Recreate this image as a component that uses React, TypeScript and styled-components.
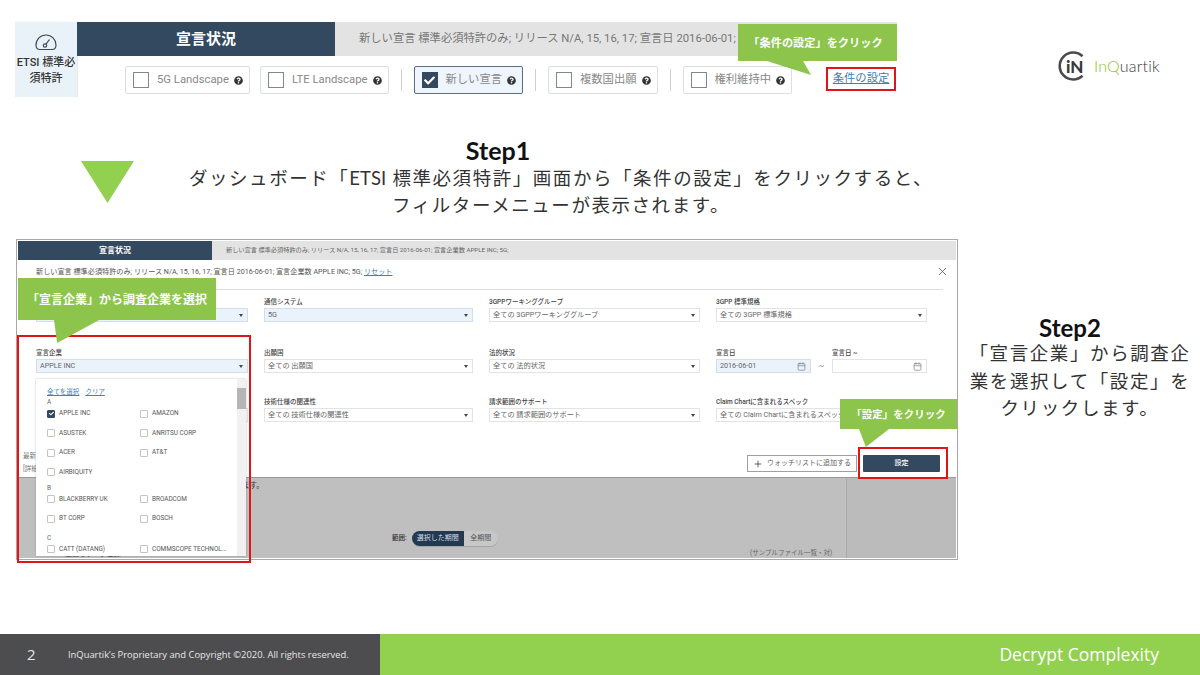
import * as React from "react"
import styled, { createGlobalStyle } from "styled-components"
import { FaQuestionCircle, FaCheck } from "react-icons/fa"
import { Calendar, Plus, X } from "lucide-react"

const UI_FONT = `Roboto, "Noto Sans CJK JP", sans-serif`
const SLIDE_FONT = `Lato, "Noto Sans CJK JP", sans-serif`
const NAVY = "#33495f"
const LIME = "#92d050"
const CALLOUT = "#8cc44c"
const RED = "#e01515"

const fields = [
  { label: "", value: "", filled: true },
  { label: "通信システム", value: "5G", filled: true },
  { label: "3GPPワーキンググループ", value: "全ての 3GPPワーキンググループ" },
  { label: "3GPP 標準規格", value: "全ての 3GPP 標準規格" },
  { label: "宣言企業", value: "APPLE INC", filled: true },
  { label: "出願国", value: "全ての 出願国" },
  { label: "法的状況", value: "全ての 法的状況" },
  null,
  { label: "", value: "" },
  { label: "技術仕様の関連性", value: "全ての 技術仕様の関連性" },
  { label: "請求範囲のサポート", value: "全ての 請求範囲のサポート" },
  { label: "Claim Chartに含まれるスペック", value: "全ての Claim Chartに含まれるスペック" },
]

const companies = [
  { head: "A", pull: 0, rows: [["APPLE INC", "AMAZON"], ["ASUSTEK", "ANRITSU CORP"], ["ACER", "AT&T"], ["AIRBIQUITY"]] },
  { head: "B", pull: -4.5, rows: [["BLACKBERRY UK", "BROADCOM"], ["BT CORP", "BOSCH"]] },
  { head: "C", pull: -1, rows: [["CATT (DATANG)", "COMMSCOPE TECHNOL..."]] },
]

const App = () => {
  return (
    <Slide>
      <GlobalStyle />
      <TopRow>
        <DashShot>
          <Tile>
            <svg width="22" height="17" viewBox="0 0 22 17" fill="none" stroke="#3c4a57" strokeWidth="1.2">
              <path d="M5 15.5h12c2.5 0 4-1.8 4-4.5C21 5.5 16.5 1 11 1S1 5.5 1 11c0 2.7 1.5 4.5 4 4.5z" />
              <circle cx="10" cy="11.5" r="1.7" />
              <path d="M11 10.2l3.5-4.7" />
            </svg>
            <TileLabel>ETSI 標準必須特許</TileLabel>
          </Tile>
          <DashBody>
            <TabBar>
              <ActiveTab>宣言状況</ActiveTab>
              <TabSummary>新しい宣言 標準必須特許のみ; リリース N/A, 15, 16, 17; 宣言日 2016-06-01;</TabSummary>
            </TabBar>
            <ChipRow>
              <Chip><Box /><ChipText>5G Landscape</ChipText><FaQuestionCircle size={9} color="#333" /></Chip>
              <Chip><Box /><ChipText>LTE Landscape</ChipText><FaQuestionCircle size={9} color="#333" /></Chip>
              <Divider />
              <Chip $active>
                <Box $checked><FaCheck size={11} color="#fff" /></Box>
                <ChipText>新しい宣言</ChipText><FaQuestionCircle size={9} color="#333" />
              </Chip>
              <Divider />
              <Chip><Box /><ChipText>複数国出願</ChipText><FaQuestionCircle size={9} color="#333" /></Chip>
              <Divider />
              <Chip><Box /><ChipText>権利維持中</ChipText><FaQuestionCircle size={9} color="#333" /></Chip>
              <SettingsLink>条件の設定</SettingsLink>
            </ChipRow>
          </DashBody>
          <TopCallout>「条件の設定」をクリック</TopCallout>
        </DashShot>
        <Logo>
          <svg width="34" height="30" viewBox="0 0 34 30" fill="none">
            <path d="M24.5 5.2A13.5 13.5 0 1 0 24.5 24.8" stroke="#4a4a4c" strokeWidth="2.6" />
            <text x="8" y="21.5" fontFamily="Lato, sans-serif" fontWeight="900" fontSize="17" fill="#3a3a3c">iN</text>
          </svg>
          <LogoWord><LogoAccent>InQ</LogoAccent>uartik</LogoWord>
        </Logo>
      </TopRow>

      <StepOneRow>
        <Triangle />
        <StepOneText>
          <StepOneTitle>Step1</StepOneTitle>
          <StepCopy>ダッシュボード「<Latin>ETSI</Latin> 標準必須特許」画面から「条件の設定」をクリックすると、<br />フィルターメニューが表示されます。</StepCopy>
        </StepOneText>
      </StepOneRow>

      <MainRow>
        <FilterShot>
          <ShotTabs>
            <ShotActiveTab>宣言状況</ShotActiveTab>
            <ShotSummary>新しい宣言 標準必須特許のみ; リリース N/A, 15, 16, 17; 宣言日 2016-06-01; 宣言企業数 APPLE INC; 5G;</ShotSummary>
          </ShotTabs>
          <Modal>
            <ModalHeader>
              <ModalSummary>新しい宣言 標準必須特許のみ; リリース N/A, 15, 16, 17; 宣言日 2016-06-01; 宣言企業数 APPLE INC; 5G; <ResetLink>リセット</ResetLink></ModalSummary>
              <CloseIcon size={13} color="#555" strokeWidth={1.5} />
            </ModalHeader>
            <FieldGrid>
              {fields.map((f, i) => f ? (
                <Field key={i}>
                  <FieldLabel>{f.label}</FieldLabel>
                  <Select $filled={f.filled}><SelectValue>{f.value}</SelectValue><Caret /></Select>
                </Field>
              ) : (
                <DateGroup key={i}>
                  <Field>
                    <FieldLabel>宣言日</FieldLabel>
                    <Select $filled><SelectValue>2016-06-01</SelectValue><Calendar size={9} color="#888" /></Select>
                  </Field>
                  <Tilde>~</Tilde>
                  <Field>
                    <FieldLabel>宣言日 ~</FieldLabel>
                    <Select><SelectValue /><Calendar size={9} color="#888" /></Select>
                  </Field>
                </DateGroup>
              ))}
            </FieldGrid>
            <ModalFooter>
              <FooterStubs><span>最新</span><span>[詳細</span></FooterStubs>
              <WatchButton><Plus size={10} color="#444" strokeWidth={2} />ウォッチリストに追加する</WatchButton>
              <ApplyButton>設定</ApplyButton>
            </ModalFooter>
          </Modal>
          <Backdrop>
            <BackdropMain>
              <BackdropNote>ます。</BackdropNote>
              <RangeRow>
                <RangeLabel>範囲:</RangeLabel>
                <Toggle>
                  <ToggleOption $on>選択した期間</ToggleOption>
                  <ToggleOption>全期間</ToggleOption>
                </Toggle>
              </RangeRow>
              <ClippedNote>重要なデータ登録 <RedMark>▾</RedMark></ClippedNote>
            </BackdropMain>
            <BackdropSide>(サンプルファイル一覧・対)</BackdropSide>
          </Backdrop>

          <CompanyMenu>
            <MenuList>
              <MenuLinks><MenuLink>全てを選択</MenuLink><MenuLink>クリア</MenuLink></MenuLinks>
              {companies.map(group => (
                <React.Fragment key={group.head}>
                  <GroupHead $pull={group.pull}>{group.head}</GroupHead>
                  {group.rows.map(row => (
                    <CompanyRow key={row[0]}>
                      {row.map(name => (
                        <Company key={name}>
                          <MiniBox $checked={name === "APPLE INC"}>
                            {name === "APPLE INC" && <FaCheck size={5} color="#fff" />}
                          </MiniBox>
                          {name}
                        </Company>
                      ))}
                    </CompanyRow>
                  ))}
                </React.Fragment>
              ))}
            </MenuList>
            <Scrollbar><ScrollThumb /></Scrollbar>
          </CompanyMenu>

          <CompanyHighlight />
          <ApplyHighlight />
          <CompanyCallout>「宣言企業」から調査企業を選択</CompanyCallout>
          <ApplyCallout>「設定」をクリック</ApplyCallout>
        </FilterShot>
        <StepTwo>
          <StepTwoTitle>Step2</StepTwoTitle>
          <StepTwoCopy>「宣言企業」から調査企業を選択して「設定」をクリックします。</StepTwoCopy>
        </StepTwo>
      </MainRow>

      <Footer>
        <FooterDark>
          <PageNo>2</PageNo>
          <Copyright>InQuartik’s Proprietary and Copyright ©2020. All rights reserved.</Copyright>
        </FooterDark>
        <FooterGreen>Decrypt Complexity</FooterGreen>
      </Footer>
    </Slide>
  )
}

const GlobalStyle = createGlobalStyle`
  html, body {
    margin: 0;
    padding: 0;
    background: #fff;
  }
`
const Slide = styled.div`
  width: 1200px;
  height: 675px;
  overflow: hidden;
  display: flex;
  flex-direction: column;
  background: #fff;
  font-family: ${SLIDE_FONT};
`
const TopRow = styled.div`
  display: flex;
  padding: 22px 0 0 15px;
  height: 75px;
`
const DashShot = styled.div`
  position: relative;
  display: flex;
  flex-shrink: 0;
  width: 882px;
  height: 75px;
`
const Tile = styled.div`
  width: 62px;
  height: 75px;
  box-sizing: border-box;
  padding-top: 12px;
  background: #eaf2f9;
  display: flex;
  flex-direction: column;
  align-items: center;
  box-shadow: 1px 0 1px rgba(0, 0, 0, 0.08);
`
const TileLabel = styled.div`
  margin-top: 4px;
  font: 500 11px/16px ${UI_FONT};
  color: #333;
  text-align: center;
  width: 62px;
`
const DashBody = styled.div`
  flex: 1;
  min-width: 0;
  display: flex;
  flex-direction: column;
`
const TabBar = styled.div`
  display: flex;
  height: 34px;
  background: #e3e3e3;
`
const ActiveTab = styled.div`
  flex-shrink: 0;
  width: 258px;
  background: ${NAVY};
  color: #fff;
  font: 700 15px/34px ${UI_FONT};
  text-align: center;
`
const TabSummary = styled.div`
  padding-left: 24px;
  font: 400 11.3px/34px ${UI_FONT};
  color: #777;
  white-space: nowrap;
  overflow: hidden;
`
const ChipRow = styled.div`
  display: flex;
  align-items: center;
  height: 28px;
  margin-top: 10px;
  padding-left: 48px;
`
const Chip = styled.div<{ $active?: boolean }>`
  display: flex;
  align-items: center;
  flex-shrink: 0;
  height: 28px;
  box-sizing: border-box;
  padding: 0 6px 0 7px;
  margin-right: 10px;
  border: 1px solid ${p => p.$active ? "#5b6f84" : "#dedede"};
  border-radius: 2px;
  background: ${p => p.$active ? "#eef5fc" : "#fff"};
`
const Box = styled.span<{ $checked?: boolean }>`
  width: 16px;
  height: 16px;
  box-sizing: border-box;
  margin-right: 8px;
  display: flex;
  align-items: center;
  justify-content: center;
  border: 1px solid ${p => p.$checked ? NAVY : "#808890"};
  background: ${p => p.$checked ? NAVY : "#fff"};
`
const ChipText = styled.span`
  margin-right: 5px;
  font: 400 11.3px/1 ${UI_FONT};
  color: #888;
  white-space: nowrap;
`
const Divider = styled.span`
  flex-shrink: 0;
  width: 1px;
  height: 22px;
  margin: 0 12px 0 2px;
  background: #d0d0d0;
`
const SettingsLink = styled.a`
  flex-shrink: 0;
  margin: 0 0 2px 24px;
  width: 70px;
  height: 24px;
  box-sizing: border-box;
  border: 2px solid ${RED};
  font: 400 11.3px/20px ${UI_FONT};
  color: #3f7fb5;
  text-align: center;
  text-decoration: underline;
  white-space: nowrap;
`
const CalloutBase = styled.div`
  position: absolute;
  background: ${CALLOUT};
  color: #fff;
  font-family: ${SLIDE_FONT};
  font-weight: 700;
  text-align: center;
  white-space: nowrap;

  &::after {
    content: '';
    position: absolute;
    top: 100%;
    background: ${CALLOUT};
  }
`
const TopCallout = styled(CalloutBase)`
  left: 723px;
  top: 2px;
  width: 159px;
  height: 37px;
  box-sizing: border-box;
  padding-right: 4px;
  font-size: 11.2px;
  line-height: 38px;

  &::after {
    left: 29px;
    width: 44px;
    height: 14px;
    clip-path: polygon(0 0, 82% 0, 100% 100%);
  }
`
const CompanyCallout = styled(CalloutBase)`
  left: 1px;
  top: 38px;
  width: 198px;
  height: 42px;
  font-size: 12px;
  line-height: 44px;

  &::after {
    left: 36px;
    width: 45px;
    height: 23px;
    clip-path: polygon(0 0, 100% 0, 7% 100%);
  }
`
const ApplyCallout = styled(CalloutBase)`
  left: 823px;
  top: 159px;
  width: 117px;
  height: 30px;
  font-size: 10.5px;
  line-height: 31px;

  &::after {
    left: 19px;
    width: 30px;
    height: 18px;
    clip-path: polygon(0 0, 100% 0, 23% 100%);
  }
`
const Logo = styled.div`
  display: flex;
  align-items: center;
  height: 30px;
  margin: 29px 0 0 161px;
`
const LogoWord = styled.span`
  margin-left: 2px;
  font: 300 16px/1 ${SLIDE_FONT};
  letter-spacing: 0.2px;
  color: #3a3a3c;
`
const LogoAccent = styled.span`
  color: #8fc31f;
`
const StepOneRow = styled.div`
  display: flex;
  margin-top: 41px;
  padding-left: 81px;
`
const Triangle = styled.div`
  width: 53px;
  height: 42px;
  margin-top: 23px;
  background: ${LIME};
  clip-path: polygon(0 0, 100% 0, 50% 100%);
`
const StepOneText = styled.div`
  width: 746px;
  margin-left: 54px;
`
const StepOneTitle = styled.div`
  margin: -1px 0 1px;
  padding-right: 126px;
  font: 700 25px/27px ${SLIDE_FONT};
  color: #111;
  text-align: center;
`
const StepCopy = styled.div`
  font: 400 18.5px/27px ${SLIDE_FONT};
  letter-spacing: 1.55px;
  color: #333;
  text-align: center;
  white-space: nowrap;
`
const Latin = styled.span`
  letter-spacing: 0;
`
const MainRow = styled.div`
  display: flex;
  margin-top: 20px;
  padding-left: 16px;
`
const FilterShot = styled.div`
  position: relative;
  width: 942px;
  height: 321px;
  box-sizing: border-box;
  border: 1px solid #a8a8a8;
  padding: 1px;
  display: flex;
  flex-direction: column;
  font-family: ${UI_FONT};
`
const ShotTabs = styled.div`
  display: flex;
  height: 19px;
  background: #e3e3e3;
  flex-shrink: 0;
`
const ShotActiveTab = styled.div`
  width: 194px;
  background: ${NAVY};
  color: #fff;
  font: 700 8px/19px ${UI_FONT};
  text-align: center;
`
const ShotSummary = styled.div`
  padding-left: 14px;
  font: 400 6.2px/19px ${UI_FONT};
  color: #666;
  white-space: nowrap;
`
const Modal = styled.div`
  height: 217px;
  flex-shrink: 0;
  display: flex;
  flex-direction: column;
  background: #fff;
  border-bottom: 1px solid #999;
`
const ModalHeader = styled.div`
  height: 30px;
  box-sizing: border-box;
  margin: 0 13px 0 4px;
  padding: 0 0 6px 14px;
  display: flex;
  align-items: center;
  justify-content: space-between;
  border-bottom: 1px solid #ddd;
`
const CloseIcon = styled(X)`
  margin-right: -6px;
`
const ModalSummary = styled.div`
  font: 400 7.15px/1 ${UI_FONT};
  color: #555;
  white-space: nowrap;
`
const ResetLink = styled.a`
  color: #3f7fb5;
  text-decoration: underline;
`
const FieldGrid = styled.div`
  display: grid;
  grid-template-columns: 212px 209px 211px 211px;
  grid-template-rows: 51px 49px 40px;
  column-gap: 16px;
  padding: 7px 0 0 18px;
`
const Field = styled.div`
  display: flex;
  flex-direction: column;
  flex: 1;
`
const FieldLabel = styled.div`
  height: 11px;
  font: 500 6.5px/11px ${UI_FONT};
  color: #444;
  white-space: nowrap;
`
const Select = styled.div<{ $filled?: boolean }>`
  height: 14px;
  box-sizing: border-box;
  display: flex;
  align-items: center;
  justify-content: space-between;
  padding: 0 4px 0 3px;
  border: 1px solid ${p => p.$filled ? "#d3dee9" : "#e3e3e3"};
  background: ${p => p.$filled ? "#eaf2fb" : "#fff"};
`
const SelectValue = styled.span`
  font: 400 7.2px/1 ${UI_FONT};
  color: #666;
  white-space: nowrap;
  overflow: hidden;
`
const Caret = styled.span`
  flex-shrink: 0;
  width: 0;
  height: 0;
  border-left: 2.5px solid transparent;
  border-right: 2.5px solid transparent;
  border-top: 3px solid #444;
`
const DateGroup = styled.div`
  display: flex;
  align-items: flex-end;
  align-self: start;
  height: 25px;
`
const Tilde = styled.span`
  width: 21px;
  height: 14px;
  font: 400 8px/14px ${UI_FONT};
  color: #777;
  text-align: center;
`
const ModalFooter = styled.div`
  flex: 1;
  display: flex;
  align-items: flex-end;
  padding: 0 16px 5px 5px;
`
const FooterStubs = styled.div`
  display: flex;
  flex-direction: column;
  gap: 6px;
  margin-right: auto;
  font: 400 6.5px/1 ${UI_FONT};
  color: #777;
`
const WatchButton = styled.div`
  width: 110px;
  height: 17px;
  box-sizing: border-box;
  display: flex;
  align-items: center;
  justify-content: center;
  gap: 4px;
  border: 1px solid #a0a0a0;
  font: 400 7px/1 ${UI_FONT};
  color: #666;
  white-space: nowrap;
`
const ApplyButton = styled.div`
  width: 77px;
  height: 17px;
  margin-left: 6px;
  border-radius: 1px;
  background: ${NAVY};
  color: #fff;
  font: 500 7px/17px ${UI_FONT};
  text-align: center;
`
const Backdrop = styled.div`
  flex: 1;
  display: flex;
  background: #bfbfbf;
  min-height: 0;
  overflow: hidden;
`
const BackdropMain = styled.div`
  position: relative;
  flex: 1;
  padding-left: 224px;
  display: flex;
  flex-direction: column;
`
const BackdropNote = styled.div`
  margin-top: 3px;
  font: 400 7.5px/10px ${UI_FONT};
  color: #333;
`
const RangeRow = styled.div`
  display: flex;
  align-items: center;
  margin: 40px 0 0 150px;
`
const RangeLabel = styled.span`
  margin-right: 5px;
  font: 500 6.5px/1 ${UI_FONT};
  color: #333;
`
const Toggle = styled.div`
  display: flex;
  height: 15px;
  width: 86px;
  border-radius: 8px;
  overflow: hidden;
  background: #c7c7c7;
  box-shadow: 0 1px 0 #a5a5a5;
`
const ToggleOption = styled.div<{ $on?: boolean }>`
  flex: ${p => p.$on ? "0 0 52px" : 1};
  background: ${p => p.$on ? "#24394f" : "transparent"};
  color: ${p => p.$on ? "#d5dde5" : "#555"};
  font: 400 7px/15px ${UI_FONT};
  text-align: center;
`
const ClippedNote = styled.div`
  position: absolute;
  left: 47px;
  bottom: 0;
  font: 400 7px/1 ${UI_FONT};
  color: #444;
  white-space: nowrap;
`
const RedMark = styled.span`
  color: ${RED};
`
const BackdropSide = styled.div`
  width: 110px;
  box-sizing: border-box;
  border-left: 1px solid #a9a9a9;
  background: #bbb;
  font: 400 6.5px/1 ${UI_FONT};
  color: #666;
  white-space: nowrap;
  padding: 72px 0 0 0;
  text-indent: -97px;
`
const CompanyMenu = styled.div`
  position: absolute;
  left: 19px;
  top: 139px;
  width: 210px;
  height: 177px;
  display: flex;
  background: #fff;
  box-shadow: 0 0 2px rgba(0, 0, 0, 0.25);
  overflow: hidden;
`
const MenuList = styled.div`
  flex: 1;
  padding: 8px 0 0 11px;
  font-family: ${UI_FONT};
`
const MenuLinks = styled.div`
  display: flex;
  gap: 6px;
  height: 10px;
`
const MenuLink = styled.a`
  font: 400 6.5px/10px ${UI_FONT};
  color: #3f7fb5;
  text-decoration: underline;
`
const GroupHead = styled.div<{ $pull: number }>`
  height: 12px;
  margin-top: ${p => p.$pull}px;
  font: 400 6.5px/10px ${UI_FONT};
  color: #666;
`
const CompanyRow = styled.div`
  display: grid;
  grid-template-columns: 93px 1fr;
  height: 19.5px;
  align-items: start;
`
const Company = styled.div`
  display: flex;
  align-items: center;
  gap: 4px;
  font: 400 6.4px/9px ${UI_FONT};
  color: #555;
  white-space: nowrap;
`
const MiniBox = styled.span<{ $checked?: boolean }>`
  width: 8px;
  height: 8px;
  box-sizing: border-box;
  border: 1px solid ${p => p.$checked ? NAVY : "#c4c4c4"};
  border-radius: 1px;
  background: ${p => p.$checked ? NAVY : "#fff"};
  display: flex;
  align-items: center;
  justify-content: center;
`
const Scrollbar = styled.div`
  width: 9px;
  background: #f1f1f1;
  padding-top: 9px;
`
const ScrollThumb = styled.div`
  height: 21px;
  background: #b5b5b5;
`
const HighlightBase = styled.div`
  position: absolute;
  box-sizing: border-box;
  border: 2px solid ${RED};
  pointer-events: none;
`
const CompanyHighlight = styled(HighlightBase)`
  left: 0;
  top: 95px;
  width: 234px;
  height: 228px;
`
const ApplyHighlight = styled(HighlightBase)`
  left: 841px;
  top: 207px;
  width: 90px;
  height: 32px;
`
const StepTwo = styled.div`
  width: 226px;
  margin-left: 9px;
  padding-top: 77px;
`
const StepTwoTitle = styled.div`
  padding-right: 20px;
  font: 700 24px/24px ${SLIDE_FONT};
  color: #111;
  text-align: center;
`
const StepTwoCopy = styled.div`
  font: 400 18.5px/27.5px ${SLIDE_FONT};
  letter-spacing: 1.6px;
  color: #333;
  text-align: center;
`
const Footer = styled.div`
  margin-top: auto;
  height: 41px;
  display: flex;
`
const FooterDark = styled.div`
  width: 380px;
  display: flex;
  align-items: center;
  background: #4d4d4f;
  color: #e6e6e6;
`
const PageNo = styled.span`
  width: 68px;
  box-sizing: border-box;
  padding-left: 27px;
  font: 400 15px/1 "Open Sans", sans-serif;
`
const Copyright = styled.span`
  font: 400 9.4px/1 "Open Sans", sans-serif;
  white-space: nowrap;
`
const FooterGreen = styled.div`
  flex: 1;
  box-sizing: border-box;
  padding-right: 41px;
  background: ${LIME};
  color: #fff;
  font: 400 17.5px/41px "Open Sans", sans-serif;
  text-align: right;
`

export default App
